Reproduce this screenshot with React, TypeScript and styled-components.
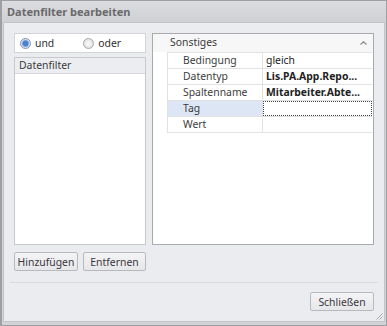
import React from "react";
import styled, { createGlobalStyle } from "styled-components";

const GlobalStyle = createGlobalStyle`
  html, body {
    margin: 0;
    padding: 0;
    background: #ffffff;
  }
  * {
    box-sizing: border-box;
  }
`;

type Prop = {
  name: string;
  value: string;
  bold?: boolean;
  focused?: boolean;
};

const props: Prop[] = [
  { name: "Bedingung", value: "gleich" },
  { name: "Datentyp", value: "Lis.PA.App.Repo...", bold: true },
  { name: "Spaltenname", value: "Mitarbeiter.Abte...", bold: true },
  { name: "Tag", value: "", focused: true },
  { name: "Wert", value: "" },
];

const App = () => {
  return (
    <>
      <GlobalStyle />
      <Window>
        <TitleBar>Datenfilter bearbeiten</TitleBar>
        <Body>
          <Main>
            <LeftCol>
              <RadioBox>
                <RadioLabel>
                  <RadioDot checked />
                  und
                </RadioLabel>
                <RadioLabel>
                  <RadioDot />
                  oder
                </RadioLabel>
              </RadioBox>
              <List>
                <ListHeader>Datenfilter</ListHeader>
              </List>
            </LeftCol>
            <Grid>
              <Category>
                Sonstiges
                <Chevron viewBox="0 0 7 4" width="7" height="4">
                  <path d="M0.5 3.5 L3.5 0.8 L6.5 3.5" fill="none" stroke="#8a8a8a" strokeWidth="1.2" />
                </Chevron>
              </Category>
              <Rows>
                {props.map((p) => (
                  <Row key={p.name}>
                    <NameCell $focused={p.focused}>{p.name}</NameCell>
                    <ValueCell $bold={p.bold} $focused={p.focused}>
                      {p.value}
                    </ValueCell>
                  </Row>
                ))}
              </Rows>
            </Grid>
          </Main>
          <ButtonRow>
            <Button $w={64}>Hinzufügen</Button>
            <Button $w={63}>Entfernen</Button>
          </ButtonRow>
          <Separator />
          <Footer>
            <Button $w={64}>Schließen</Button>
          </Footer>
          <Grip viewBox="0 0 8 8" width="8" height="8">
            <path d="M7.5 1.5 L1.5 7.5 M7.5 4.5 L4.5 7.5" stroke="#a8a8a8" strokeWidth="1" />
          </Grip>
        </Body>
      </Window>
    </>
  );
};

export default App;

const Window = styled.div`
  width: 387px;
  height: 326px;
  display: flex;
  flex-direction: column;
  border: 1px solid #9e9fa2;
  border-left-width: 2px;
  background: #d2d3d6;
  font-family: "Noto Sans", "Open Sans", sans-serif;
  font-size: 10.4px;
  color: #3c3c3c;
`;

const TitleBar = styled.div`
  height: 21px;
  flex: none;
  padding: 3px 0 0 5px;
  font-weight: bold;
  font-size: 11px;
  color: #6a6a6c;
  background: linear-gradient(#dbdcdf, #d0d1d4);
`;

const Body = styled.div`
  position: relative;
  flex: 1;
  margin: 0 1px 3px 1px;
  border: 1px solid #c3c4c7;
  background: #ebecef;
  padding: 10px 10px 0 10px;
  display: flex;
  flex-direction: column;
`;

const Main = styled.div`
  display: grid;
  grid-template-columns: 132px 222px;
  column-gap: 6px;
  height: 212px;
`;

const LeftCol = styled.div`
  display: flex;
  flex-direction: column;
  gap: 4px;
`;

const RadioBox = styled.div`
  height: 20px;
  display: flex;
  align-items: center;
  gap: 29px;
  padding-left: 5px;
  background: #fff;
  border: 1px solid #d3d4d7;
`;

const RadioLabel = styled.label`
  display: flex;
  align-items: center;
  gap: 4px;
  color: #2e2e2e;
`;

const RadioDot = styled.span<{ checked?: boolean }>`
  width: 11px;
  height: 11px;
  border-radius: 50%;
  border: 1px solid ${(p) => (p.checked ? "#7c93b8" : "#a9a9a9")};
  background: ${(p) =>
    p.checked
      ? "radial-gradient(circle, #4f7fd0 0 2.5px, #a8c0e8 3.5px, #eef2f8 4.5px)"
      : "radial-gradient(circle, #f4f4f4 0 2px, #dcdcdc 5px)"};
`;

const List = styled.div`
  flex: 1;
  background: #fff;
  border: 1px solid #c8c9cc;
`;

const ListHeader = styled.div`
  height: 16px;
  padding-left: 4px;
  line-height: 15px;
  background: #ecedf0;
  border-bottom: 1px solid #d6d7da;
  color: #3a3a3a;
`;

const Grid = styled.div`
  background: #fff;
  border: 1px solid #a9aaad;
  display: flex;
  flex-direction: column;
`;

const Category = styled.div`
  position: relative;
  height: 18px;
  padding-left: 17px;
  line-height: 17px;
  color: #3a3a3a;
  background: #f7f7f7;
`;

const Chevron = styled.svg`
  position: absolute;
  right: 6px;
  top: 7px;
`;

const Rows = styled.div`
  margin-left: 14px;
  margin-right: 1px;
  border-top: 1px solid #e2e2e2;
`;

const Row = styled.div`
  display: grid;
  grid-template-columns: 95px 1fr;
  height: 16px;
  border-bottom: 1px solid #e2e2e2;
  border-left: 1px solid #e2e2e2;
`;

const NameCell = styled.div<{ $focused?: boolean }>`
  padding-left: 15px;
  line-height: 15px;
  color: #3c3c3c;
  border-right: 1px solid #e2e2e2;
  background: ${(p) => (p.$focused ? "#dce6f5" : "#fff")};
`;

const ValueCell = styled.div<{ $bold?: boolean; $focused?: boolean }>`
  padding-left: 3px;
  line-height: 15px;
  white-space: nowrap;
  overflow: hidden;
  color: #222;
  font-weight: ${(p) => (p.$bold ? "bold" : "normal")};
  border: ${(p) => (p.$focused ? "1px dotted #444" : "none")};
`;

const ButtonRow = styled.div`
  display: flex;
  gap: 5px;
  margin-top: 7px;
`;

const Button = styled.button<{ $w: number }>`
  width: ${(p) => p.$w}px;
  height: 19px;
  padding: 0;
  font-family: inherit;
  font-size: 10.4px;
  color: #3a3440;
  background: linear-gradient(#f4f4f5, #e6e7e9);
  border: 1px solid #b8b9bc;
  border-radius: 2px;
`;

const Separator = styled.div`
  height: 1px;
  margin: 11px -4px 0;
  background: #d9dadd;
`;

const Footer = styled.div`
  display: flex;
  justify-content: flex-end;
  margin-top: 9px;
`;

const Grip = styled.svg`
  position: absolute;
  right: 1px;
  bottom: 1px;
`;
